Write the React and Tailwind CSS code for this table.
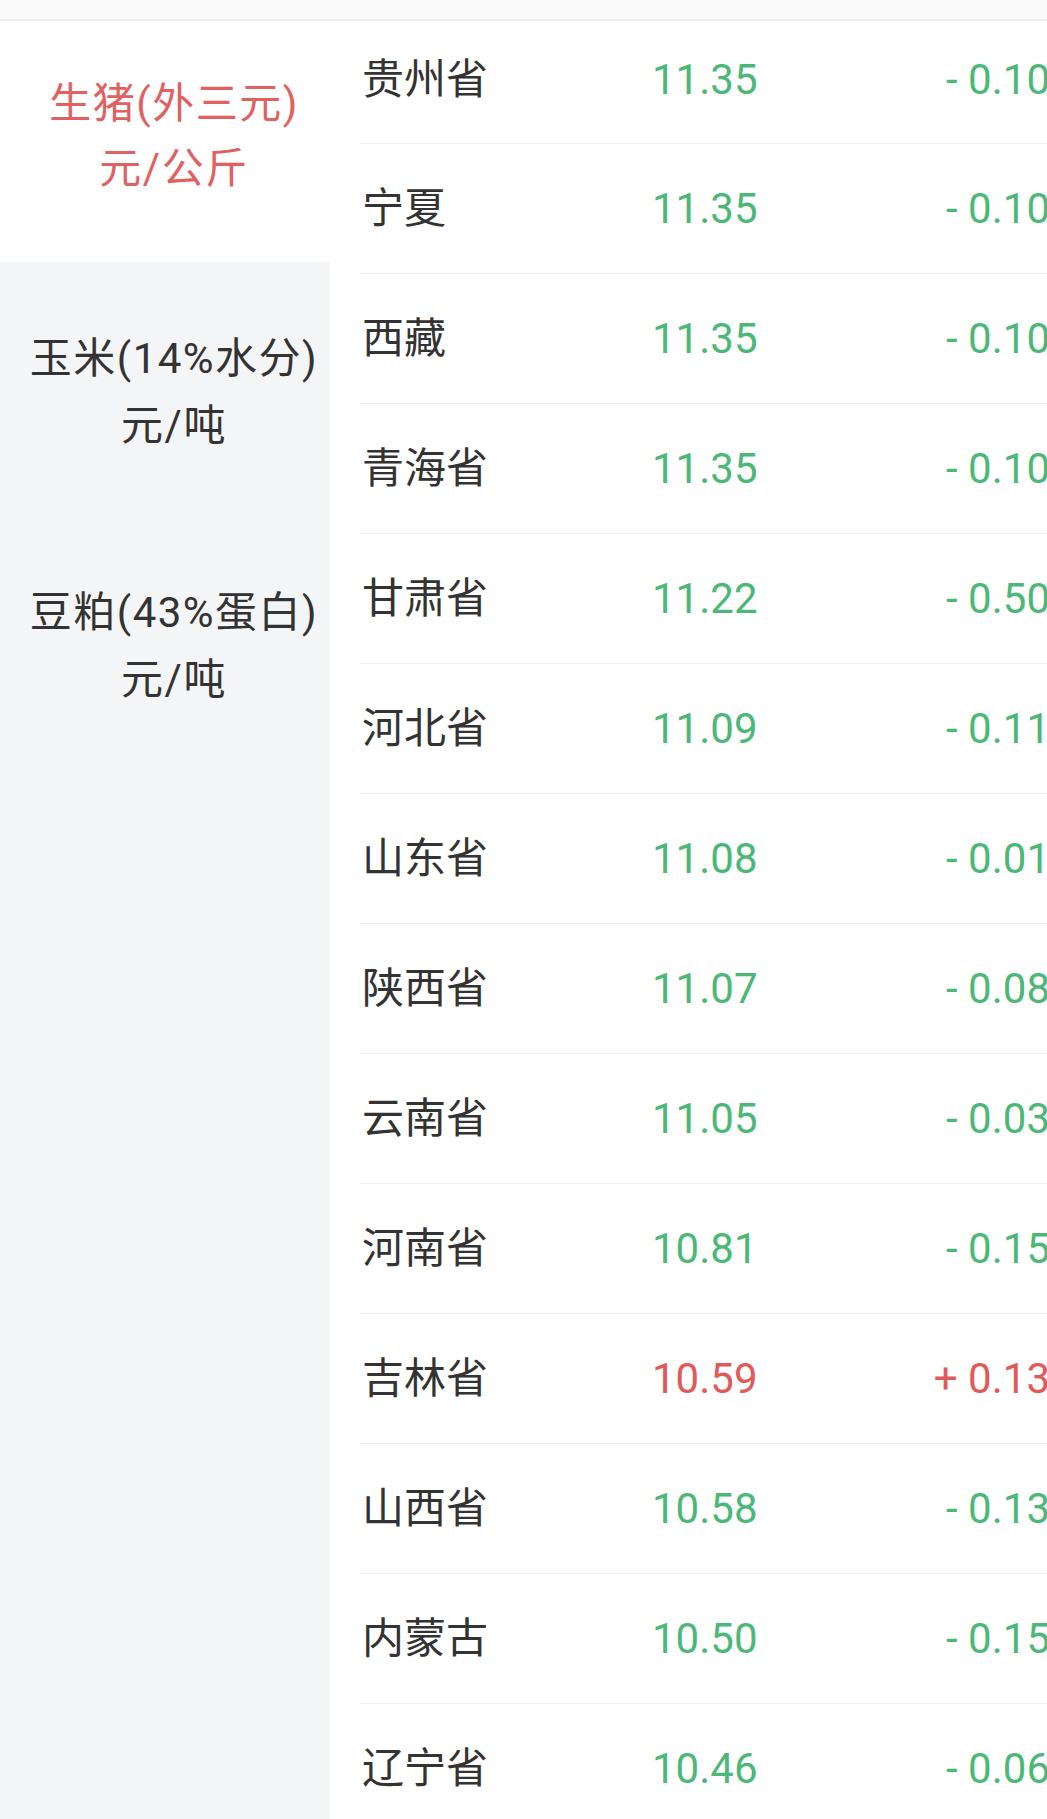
import React from "react";

const rows = [
  ["贵州省", "11.35", "- 0.10", "g"],
  ["宁夏", "11.35", "- 0.10", "g"],
  ["西藏", "11.35", "- 0.10", "g"],
  ["青海省", "11.35", "- 0.10", "g"],
  ["甘肃省", "11.22", "- 0.50", "g"],
  ["河北省", "11.09", "- 0.11", "g"],
  ["山东省", "11.08", "- 0.01", "g"],
  ["陕西省", "11.07", "- 0.08", "g"],
  ["云南省", "11.05", "- 0.03", "g"],
  ["河南省", "10.81", "- 0.15", "g"],
  ["吉林省", "10.59", "+ 0.13", "r"],
  ["山西省", "10.58", "- 0.13", "g"],
  ["内蒙古", "10.50", "- 0.15", "g"],
  ["辽宁省", "10.46", "- 0.06", "g"],
];

const cjk = { fontFamily: 'Roboto, "Noto Sans CJK SC", sans-serif' };

export default function App() {
  return (
    <div className="w-[1047px] h-[1819px] overflow-hidden bg-white flex flex-col" style={cjk}>
      <div className="h-[21px] shrink-0 bg-[#fafafa] border-b-2 border-[#eeeeee]" />
      <div className="flex flex-1">
        <div className="w-[330px] shrink-0 flex flex-col bg-[#f4f5f7]">
          <div className="h-[241px] bg-white flex flex-col items-center pl-[18px] pt-[50px] text-[42px] leading-[66px] tracking-[1.5px] text-[#e06161] whitespace-nowrap">
            <div className="mb-[-1px]">生猪(外三元)</div>
            <div>元/公斤</div>
          </div>
          <div className="flex flex-col items-center pl-[18px] pt-[63px] text-[42px] leading-[68px] tracking-[1.5px] text-[#333333] whitespace-nowrap">
            <div className="mb-[-1px]">玉米(14%水分)</div>
            <div>元/吨</div>
          </div>
          <div className="flex flex-col items-center pl-[18px] pt-[119px] text-[42px] leading-[68px] tracking-[1.5px] text-[#333333] whitespace-nowrap">
            <div className="mb-[-1px]">豆粕(43%蛋白)</div>
            <div>元/吨</div>
          </div>
        </div>
        <div className="flex-1 flex flex-col bg-white">
          {rows.map(([name, price, chg, c], i) => (
            <div
              key={name}
              className={
                "ml-[30px] shrink-0 flex items-center border-b border-[#f0f0f0] text-[42px] whitespace-nowrap " +
                (i === 0 ? "h-[123px] pb-[6px]" : "h-[130px]")
              }
            >
              <div className="w-[292px] pl-[2px] text-[#333333]">{name}</div>
              <div className={"w-[198px] " + (c === "r" ? "text-[#e05a5a]" : "text-[#4cb877]")}>{price}</div>
              <div className={"w-[200px] shrink-0 text-right " + (c === "r" ? "text-[#e05a5a]" : "text-[#4cb877]")}>{chg}</div>
            </div>
          ))}
        </div>
      </div>
    </div>
  );
}
